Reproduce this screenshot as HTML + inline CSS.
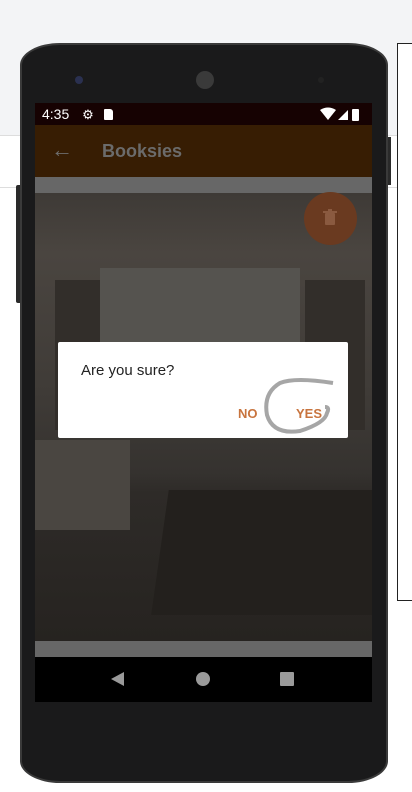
<!DOCTYPE html>
<html><head><style>
*{margin:0;padding:0;box-sizing:border-box}
body{width:412px;height:792px;overflow:hidden;background:#fff;font-family:"Liberation Sans",sans-serif;position:relative}
.a{position:absolute}
</style></head><body>
<div class="a" style="left:0;top:0;width:412px;height:135px;background:#f3f4f6"></div>
<div class="a" style="left:0;top:135px;width:412px;height:1px;background:#ddd"></div>
<div class="a" style="left:0;top:187px;width:412px;height:1px;background:#ddd"></div>
<div class="a" style="left:397px;top:43px;width:20px;height:558px;border:1px solid #222;background:#fff"></div>
<div class="a" style="left:16px;top:185px;width:6px;height:118px;background:#2a2a2a;border-radius:2px"></div>
<div class="a" style="left:386px;top:137px;width:5px;height:48px;background:#2a2a2a"></div>
<div class="a" style="left:20px;top:43px;width:368px;height:740px;background:#1a1a1b;border-radius:40px/22px;border:2px solid #3a3a3a"></div>
<div class="a" style="left:75px;top:76px;width:8px;height:8px;border-radius:50%;background:#2a3050"></div>
<div class="a" style="left:196px;top:71px;width:18px;height:18px;border-radius:50%;background:#3a3a3a"></div>
<div class="a" style="left:318px;top:77px;width:6px;height:6px;border-radius:50%;background:#222"></div>
<div class="a" style="left:35px;top:103px;width:337px;height:22px;background:#160202;color:#fff;font-size:14px;line-height:22px;padding-left:7px">4:35
<span style="display:inline-block;margin-left:9px;font-size:13px">⚙</span>
<span style="display:inline-block;width:9px;height:11px;background:#fff;margin-left:6px;border-radius:1px 3px 1px 1px;vertical-align:-1px"></span>
</div>
<svg class="a" style="left:320px;top:107px" width="48" height="14"><path d="M0 3 Q8 -2 16 3 L8 13Z" fill="#fff"/><path d="M18 13 L28 3 L28 13Z" fill="#fff"/><rect x="32" y="2" width="7" height="12" rx="1" fill="#fff"/></svg>
<div class="a" style="left:35px;top:125px;width:337px;height:52px;background:#371d03"></div>
<div class="a" style="left:51px;top:137px;color:#6e6e6e;font-size:22px">←</div>
<div class="a" style="left:102px;top:141px;color:#6b6b6b;font-size:18px;font-weight:bold">Booksies</div>
<div class="a" style="left:35px;top:177px;width:337px;height:16px;background:#676767"></div>
<div class="a" style="left:35px;top:193px;width:337px;height:448px;overflow:hidden;background:linear-gradient(#3e3a36 0,#4a4540 60px,#3f3b37 200px,#35322f 280px,#2e2b28 300px,#262320 448px)">
<div class="a" style="left:65px;top:75px;width:200px;height:145px;background:#55534f"></div>
<div class="a" style="left:20px;top:87px;width:45px;height:150px;background:#322e2a"></div>
<div class="a" style="left:270px;top:87px;width:60px;height:150px;background:#322e2a"></div>
<div class="a" style="left:0;top:247px;width:95px;height:90px;background:#4a4641"></div>
<div class="a" style="left:125px;top:297px;width:230px;height:125px;background:#23201d;transform:skewX(-8deg)"></div>
</div>
<div class="a" style="left:35px;top:641px;width:337px;height:16px;background:#676767"></div>
<div class="a" style="left:35px;top:657px;width:337px;height:45px;background:#000"></div>
<svg class="a" style="left:35px;top:657px" width="337" height="45"><path d="M76 22 L89 15 L89 29Z" fill="#9a9a9a"/><circle cx="168" cy="22" r="7" fill="#9a9a9a"/><rect x="245" y="15" width="14" height="14" rx="1" fill="#9a9a9a"/></svg>
<div class="a" style="left:304px;top:192px;width:53px;height:53px;border-radius:50%;background:#6a3a20"></div>
<svg class="a" style="left:322px;top:209px" width="16" height="18"><rect x="3" y="4" width="10" height="12" rx="1" fill="#8a5a40"/><rect x="1" y="2" width="14" height="2" fill="#8a5a40"/><rect x="6" y="0" width="4" height="2" fill="#8a5a40"/></svg>
<div class="a" style="left:58px;top:342px;width:290px;height:96px;background:#fff;border-radius:2px"></div>
<div class="a" style="left:81px;top:362px;color:#222;font-size:15px">Are you sure?</div>
<div class="a" style="left:238px;top:406px;color:#c8743e;font-size:13px;font-weight:bold">NO</div>
<div class="a" style="left:296px;top:406px;color:#c8743e;font-size:13px;font-weight:bold">YES</div>
<svg class="a" style="left:255px;top:375px" width="85" height="65"><path d="M78 8 Q40 2 25 8 Q8 18 12 40 Q18 60 45 56 Q70 48 72 38 Q75 32 70 32" fill="none" stroke="#888" stroke-width="4" opacity="0.75"/></svg>
</body></html>
